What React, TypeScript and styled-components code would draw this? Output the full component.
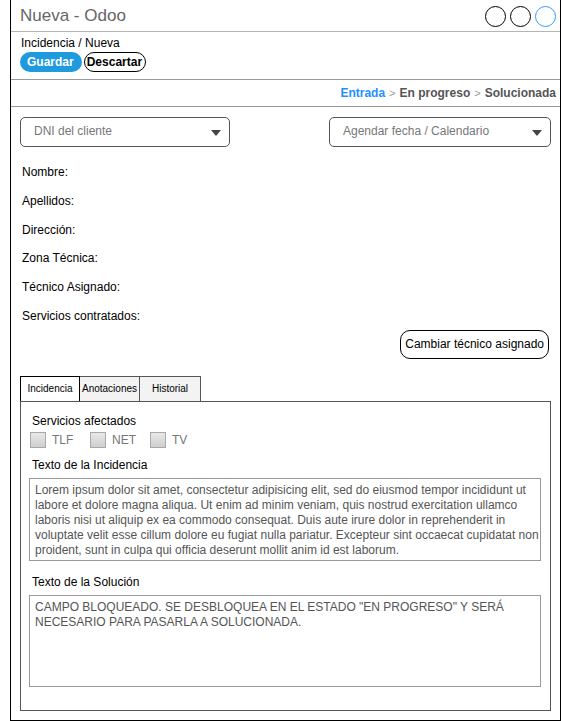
import React from "react";
import styled, { createGlobalStyle } from "styled-components";

const GlobalStyle = createGlobalStyle`
  html, body {
    margin: 0;
    padding: 0;
    background: #ffffff;
    font-family: "Liberation Sans", Arial, sans-serif;
  }
`;

const labels = [
  "Nombre:",
  "Apellidos:",
  "Dirección:",
  "Zona Técnica:",
  "Técnico Asignado:",
  "Servicios contratados:",
];

const services = ["TLF", "NET", "TV"];

const tabs = [
  { name: "Incidencia", active: true },
  { name: "Anotaciones", active: false },
  { name: "Historial", active: false },
];

const lorem =
  "Lorem ipsum dolor sit amet, consectetur adipisicing elit, sed do eiusmod tempor incididunt ut labore et dolore magna aliqua. Ut enim ad minim veniam, quis nostrud exercitation ullamco laboris nisi ut aliquip ex ea commodo consequat. Duis aute irure dolor in reprehenderit in voluptate velit esse cillum dolore eu fugiat nulla pariatur. Excepteur sint occaecat cupidatat non proident, sunt in culpa qui officia deserunt mollit anim id est laborum.";

const Caret = () => (
  <svg width="10" height="6" viewBox="0 0 10 6">
    <path d="M0 0 L10 0 L5 6 Z" fill="#444" />
  </svg>
);

export default function App() {
  return (
    <>
      <GlobalStyle />
      <Frame>
        <TitleBar>
          <Title>Nueva - Odoo</Title>
          <Circles>
            <Circle />
            <Circle />
            <Circle $blue />
          </Circles>
        </TitleBar>
        <Header>
          <Breadcrumb>Incidencia / Nueva</Breadcrumb>
          <Buttons>
            <PrimaryButton>Guardar</PrimaryButton>
            <OutlineButton>Descartar</OutlineButton>
          </Buttons>
        </Header>
        <StatusBar>
          <Stage $active>Entrada</Stage>
          <Sep>&gt;</Sep>
          <Stage>En progreso</Stage>
          <Sep>&gt;</Sep>
          <Stage>Solucionada</Stage>
        </StatusBar>
        <Content>
          <SelectRow>
            <Select $width={210}>
              <span>DNI del cliente</span>
              <Caret />
            </Select>
            <Select $width={222}>
              <span>Agendar fecha / Calendario</span>
              <Caret />
            </Select>
          </SelectRow>
          <Fields>
            {labels.map((l) => (
              <FieldLabel key={l}>{l}</FieldLabel>
            ))}
          </Fields>
          <ActionRow>
            <RoundButton>Cambiar técnico asignado</RoundButton>
          </ActionRow>
          <TabBar>
            {tabs.map((t) => (
              <Tab key={t.name} $active={t.active}>
                {t.name}
              </Tab>
            ))}
          </TabBar>
          <TabPanel>
            <SectionTitle>Servicios afectados</SectionTitle>
            <Checks>
              {services.map((s) => (
                <Check key={s}>
                  <Box />
                  {s}
                </Check>
              ))}
            </Checks>
            <SectionTitle>Texto de la Incidencia</SectionTitle>
            <TextArea $height={83}>{lorem}</TextArea>
            <SectionTitle $spaced>Texto de la Solución</SectionTitle>
            <TextArea $height={92}>
              CAMPO BLOQUEADO. SE DESBLOQUEA EN EL ESTADO "EN PROGRESO" Y SERÁ
              NECESARIO PARA PASARLA A SOLUCIONADA.
            </TextArea>
          </TabPanel>
        </Content>
      </Frame>
    </>
  );
}

const Frame = styled.div`
  box-sizing: border-box;
  margin-left: 10px;
  width: 551px;
  height: 721px;
  border: 1px solid #000;
  border-top: none;
  display: flex;
  flex-direction: column;
`;

const TitleBar = styled.div`
  height: 32px;
  box-sizing: border-box;
  border-bottom: 1px solid #b5b5b5;
  display: flex;
  align-items: center;
  justify-content: space-between;
  padding: 0 4px 0 9px;
`;

const Title = styled.div`
  font-size: 17px;
  color: #666;
`;

const Circles = styled.div`
  display: flex;
  gap: 4px;
  margin-top: 1px;
`;

const Circle = styled.div<{ $blue?: boolean }>`
  width: 19px;
  height: 19px;
  border-radius: 50%;
  border: 1px solid ${({ $blue }) => ($blue ? "#3399ff" : "#000")};
`;

const Header = styled.div`
  height: 48px;
  box-sizing: border-box;
  border-bottom: 1px solid #999;
  padding: 4px 8px 0 10px;
`;

const Breadcrumb = styled.div`
  font-size: 12px;
  line-height: 14px;
  color: #000;
`;

const Buttons = styled.div`
  display: flex;
  gap: 2px;
  margin-top: 2px;
  margin-left: -1px;
`;

const PrimaryButton = styled.div`
  height: 20px;
  box-sizing: border-box;
  padding: 0 8px 0 7px;
  border-radius: 10px;
  background: #1f9ade;
  color: #fff;
  font-size: 12px;
  font-weight: bold;
  display: flex;
  align-items: center;
`;

const OutlineButton = styled.div`
  height: 20px;
  box-sizing: border-box;
  padding: 0 3px 0 2px;
  border-radius: 10px;
  border: 1px solid #000;
  color: #000;
  font-size: 12px;
  font-weight: bold;
  display: flex;
  align-items: center;
`;

const StatusBar = styled.div`
  height: 27px;
  box-sizing: border-box;
  border-bottom: 1px solid #999;
  display: flex;
  align-items: center;
  justify-content: flex-end;
  gap: 4px;
  padding: 0 4px 1px 0;
  font-size: 12px;
`;

const Stage = styled.span<{ $active?: boolean }>`
  font-weight: bold;
  color: ${({ $active }) => ($active ? "#1e90ff" : "#555")};
`;

const Sep = styled.span`
  color: #999;
  font-size: 11px;
`;

const Content = styled.div`
  flex: 1;
  display: flex;
  flex-direction: column;
  padding: 10px 9px 9px 9px;
  min-height: 0;
`;

const SelectRow = styled.div`
  display: flex;
  justify-content: space-between;
`;

const Select = styled.div<{ $width: number }>`
  width: ${({ $width }) => $width}px;
  height: 30px;
  box-sizing: border-box;
  border: 1px solid #555;
  border-radius: 5px;
  display: flex;
  align-items: center;
  justify-content: space-between;
  padding: 0 8px 2px 13px;
  font-size: 12px;
  color: #777;
  svg {
    margin-top: 4px;
  }
`;

const Fields = styled.div`
  display: flex;
  flex-direction: column;
  gap: 14.8px;
  margin-top: 18px;
  padding-left: 2px;
`;

const FieldLabel = styled.div`
  font-size: 12px;
  line-height: 14px;
  color: #000;
`;

const ActionRow = styled.div`
  display: flex;
  justify-content: flex-end;
  margin-top: 7px;
  padding-right: 2px;
`;

const RoundButton = styled.div`
  height: 29px;
  box-sizing: border-box;
  border: 1px solid #000;
  border-radius: 10px;
  padding: 0 4px;
  font-size: 12px;
  color: #000;
  display: flex;
  align-items: center;
`;

const TabBar = styled.div`
  display: flex;
  margin-top: 17px;
`;

const Tab = styled.div<{ $active: boolean }>`
  width: 60px;
  height: 25px;
  box-sizing: border-box;
  border: 1px solid #555;
  border-left: ${({ $active }) => ($active ? "1px solid #000" : "none")};
  border-color: ${({ $active }) => ($active ? "#000" : "#555")};
  border-bottom: none;
  background: ${({ $active }) => ($active ? "#fff" : "#f3f3f3")};
  font-size: 10px;
  color: #000;
  display: flex;
  align-items: center;
  justify-content: center;
  &:last-child {
    width: 61px;
  }
`;

const TabPanel = styled.div`
  flex: 1;
  box-sizing: border-box;
  border: 1px solid #555;
  padding: 12px 9px 0 8px;
`;

const SectionTitle = styled.div<{ $spaced?: boolean }>`
  font-size: 12px;
  line-height: 14px;
  color: #000;
  margin-left: 3px;
  margin-top: ${({ $spaced }) => ($spaced ? "14px" : "0")};
`;

const Checks = styled.div`
  display: flex;
  margin: 4px 0 10px 1px;
`;

const Check = styled.div`
  width: 60px;
  display: flex;
  align-items: center;
  gap: 6px;
  font-size: 12px;
  color: #777;
`;

const Box = styled.div`
  width: 16px;
  height: 16px;
  box-sizing: border-box;
  border: 1px solid #aaa;
  background: linear-gradient(#e8e8e8, #cfcfcf);
`;

const TextArea = styled.div<{ $height: number }>`
  height: ${({ $height }) => $height}px;
  box-sizing: border-box;
  margin-top: 6px;
  border: 1px solid #999;
  padding: 4px 1px 4px 5px;
  font-size: 12px;
  line-height: 15px;
  color: #555;
`;
